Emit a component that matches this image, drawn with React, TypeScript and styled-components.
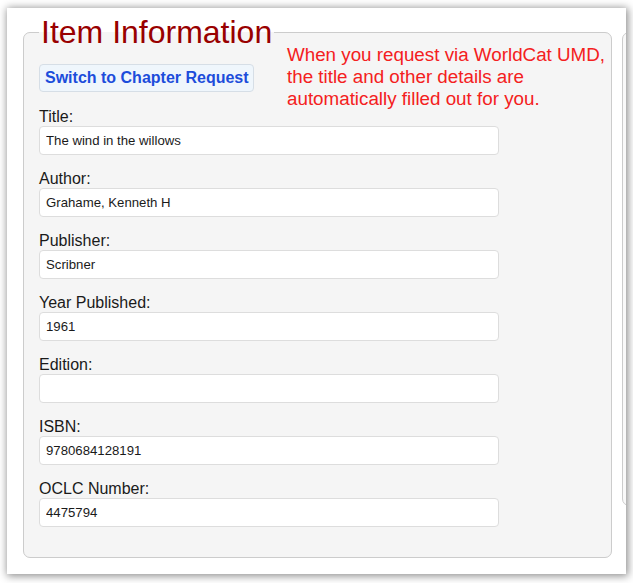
import React from "react";
import styled, { createGlobalStyle } from "styled-components";

const GlobalStyle = createGlobalStyle`
  html, body {
    margin: 0;
    padding: 0;
    background: #ffffff;
  }
  body {
    font-family: "Liberation Sans", Arial, sans-serif;
  }
`;

const Page = styled.div`
  padding: 8px 7px 9px 7px;
  width: 633px;
  height: 583px;
  box-sizing: border-box;
`;

const Frame = styled.div`
  width: 619px;
  height: 566px;
  background: #ffffff;
  box-shadow: 1px 1px 8px 1px rgba(0, 0, 0, 0.45);
  display: flex;
  align-items: flex-start;
  overflow: hidden;
  box-sizing: border-box;
  padding: 8px 0 0 16px;
  gap: 10px;
`;

const Panel = styled.fieldset`
  flex: 0 0 auto;
  width: 589px;
  margin: 0;
  padding: 0 5px 30px 15px;
  box-sizing: border-box;
  background: #f5f5f5;
  border: 1px solid #cccccc;
  border-radius: 7px;
  min-width: 0;
`;

const SidePanel = styled.div`
  flex: 0 0 auto;
  width: 40px;
  height: 472px;
  margin-top: 16px;
  border: 1px solid #cccccc;
  border-radius: 7px;
  background: #f9f9f9;
`;

const Legend = styled.legend`
  padding: 0 2px;
  font-size: 32px;
  line-height: 32px;
  color: #990000;
  font-weight: normal;
`;

const Header = styled.div`
  display: grid;
  grid-template-columns: 248px 1fr;
  align-items: center;
  margin: -4px 0 -2px;
`;

const SwitchButton = styled.button`
  justify-self: start;
  font-family: "Liberation Sans", Arial, sans-serif;
  font-size: 16px;
  font-weight: bold;
  color: #1c4ddb;
  background: #eff6fc;
  border: 1px solid #d6dee6;
  border-radius: 4px;
  height: 28px;
  margin-top: 1px;
  padding: 0 4px 0 5px;
  cursor: pointer;
`;

const Note = styled.p`
  margin: 0;
  font-size: 18.8px;
  line-height: 22px;
  color: #f42020;
  white-space: nowrap;
`;

const Field = styled.div`
  display: flex;
  flex-direction: column;
  margin-bottom: 15px;

  &:last-child {
    margin-bottom: 0;
  }
`;

const Label = styled.label`
  font-size: 16px;
  line-height: 18px;
  color: #1a1a1a;
`;

const Input = styled.input`
  width: 460px;
  height: 29px;
  box-sizing: border-box;
  border: 1px solid #dddddd;
  border-radius: 4px;
  background: #ffffff;
  padding: 0 6px;
  font-family: "Liberation Sans", Arial, sans-serif;
  font-size: 13.2px;
  color: #1a1a1a;
  outline: none;
`;

const fields: { label: string; value: string }[] = [
  { label: "Title:", value: "The wind in the willows" },
  { label: "Author:", value: "Grahame, Kenneth H" },
  { label: "Publisher:", value: "Scribner" },
  { label: "Year Published:", value: "1961" },
  { label: "Edition:", value: "" },
  { label: "ISBN:", value: "9780684128191" },
  { label: "OCLC Number:", value: "4475794" },
];

export default function App() {
  return (
    <>
      <GlobalStyle />
      <Page>
        <Frame>
          <Panel>
            <Legend>Item Information</Legend>
            <Header>
              <SwitchButton type="button">Switch to Chapter Request</SwitchButton>
              <Note>
                When you request via WorldCat UMD,
                <br />
                the title and other details are
                <br />
                automatically filled out for you.
              </Note>
            </Header>
            {fields.map((f) => (
              <Field key={f.label}>
                <Label>{f.label}</Label>
                <Input type="text" defaultValue={f.value} />
              </Field>
            ))}
          </Panel>
          <SidePanel />
        </Frame>
      </Page>
    </>
  );
}
